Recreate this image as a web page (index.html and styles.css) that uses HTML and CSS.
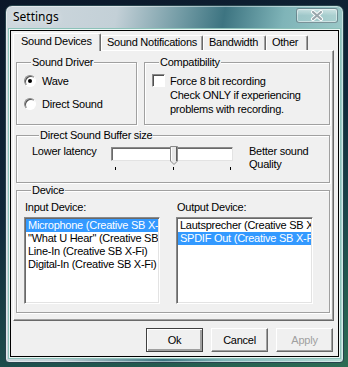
FILE: index.html
```html
<!DOCTYPE html>
<html lang="en">
<head>
    <meta charset="UTF-8">
    <title>Settings</title>
    <link rel="stylesheet" href="styles.css">
</head>
<body>
    <div class="window">
        <div class="titlebar">
            <span class="title">Settings</span>
            <div class="close">
                <svg width="14" height="11" viewBox="0 0 14 11">
                    <path d="M3 2 L11 9 M11 2 L3 9" stroke="#fff" stroke-width="4" stroke-linecap="round"/>
                    <path d="M3 2 L11 9 M11 2 L3 9" stroke="#9aa6ac" stroke-width="2.2" stroke-linecap="round"/>
                </svg>
            </div>
        </div>
        <div class="client">
            <div class="tabs">
                <div class="tab active tab-devices">Sound Devices</div>
                <div class="tab tab-notify">Sound Notifications</div>
                <div class="tab tab-bandwidth">Bandwidth</div>
                <div class="tab tab-other">Other</div>
            </div>
            <div class="panel">
                <div class="top-row">
                    <fieldset class="group driver">
                        <legend>Sound Driver</legend>
                        <div class="radio"><span class="radio-dot checked"></span>Wave</div>
                        <div class="radio"><span class="radio-dot"></span>Direct Sound</div>
                    </fieldset>
                    <fieldset class="group compat">
                        <legend>Compatibility</legend>
                        <div class="check"><span class="box"></span>Force 8 bit recording</div>
                        <div class="note">Check ONLY if experiencing<br>problems with recording.</div>
                    </fieldset>
                </div>
                <fieldset class="group buffer">
                    <legend>Direct Sound Buffer size</legend>
                    <div class="buffer-row">
                        <div class="low-label">Lower latency</div>
                        <div class="slider">
                            <div class="track"></div>
                            <svg class="thumb" width="8" height="19" viewBox="0 0 8 19">
                                <path d="M0.5 0.5 H7.5 V15 L4 18.5 L0.5 15 Z" fill="#e8e8e8" stroke="#8a8a8a"/>
                                <path d="M1.5 1.5 V14.5" stroke="#fff"/>
                                <path d="M6.5 1 V15" stroke="#606060"/>
                            </svg>
                            <div class="ticks"><span></span><span></span><span></span></div>
                        </div>
                        <div class="high-label">Better sound<br>Quality</div>
                    </div>
                </fieldset>
                <fieldset class="group device">
                    <legend>Device</legend>
                    <div class="device-cols">
                        <div class="device-col input-col">
                            <div class="col-label">Input Device:</div>
                            <ul class="list">
                                <li class="selected">Microphone (Creative SB X-Fi)</li>
                                <li>"What U Hear" (Creative SB X-Fi)</li>
                                <li>Line-In (Creative SB X-Fi)</li>
                                <li>Digital-In (Creative SB X-Fi)</li>
                            </ul>
                        </div>
                        <div class="device-col output-col">
                            <div class="col-label">Output Device:</div>
                            <ul class="list">
                                <li>Lautsprecher (Creative SB X-Fi)</li>
                                <li class="selected">SPDIF Out (Creative SB X-Fi)</li>
                            </ul>
                        </div>
                    </div>
                </fieldset>
            </div>
            <div class="buttons">
                <button class="btn default">Ok</button>
                <button class="btn">Cancel</button>
                <button class="btn disabled">Apply</button>
            </div>
        </div>
    </div>
</body>
</html>
```
FILE: styles.css
```css
* {
    box-sizing: border-box;
}
body {
    margin: 0;
    width: 348px;
    height: 367px;
    overflow: hidden;
    background: linear-gradient(160deg, #0b1729 0%, #10283a 45%, #1d4e4c 75%, #2d6d55 100%);
    font-family: "Liberation Sans", Arial, sans-serif;
    font-size: 11px;
    color: #000;
}
.window {
    margin: 5px 0 0 5px;
    width: 339px;
    height: 358px;
    border: 1px solid #27434c;
    border-radius: 7px 7px 4px 4px;
    padding: 0 4px 5px 4px;
    background: linear-gradient(100deg, #cfd8de 0%, #c3d0d7 28%, #6e98a2 45%, #3d7481 55%, #7fb4b8 70%, #b6dcd6 100%);
    box-shadow: inset 0 0 0 1px rgba(255, 255, 255, 0.45);
    display: flex;
    flex-direction: column;
}
.titlebar {
    height: 24px;
    flex: none;
    display: flex;
    justify-content: space-between;
    padding-left: 3px;
}
.title {
    font-family: "Noto Sans", sans-serif;
    font-size: 12px;
    line-height: 22px;
    text-shadow: 0 0 6px rgba(255, 255, 255, 0.9);
}
.close {
    margin-top: 2px;
    margin-right: 1px;
    width: 42px;
    height: 15px;
    border: 1px solid rgba(70, 95, 105, 0.6);
    border-radius: 3px;
    background: linear-gradient(rgba(255, 255, 255, 0.55), rgba(255, 255, 255, 0.2) 50%, rgba(200, 225, 225, 0.35));
    box-shadow: inset 0 0 0 1px rgba(255, 255, 255, 0.45);
    display: flex;
    align-items: center;
    justify-content: center;
}
.client {
    flex: 1;
    border: 1px solid #000;
    background: #f0f0f0;
    box-shadow: 0 0 0 1px #eaf6f4, 0 0 0 2px #8cc2b9;
    padding: 2px 4px 4px 2px;
    display: flex;
    flex-direction: column;
    letter-spacing: -0.25px;
}
.tabs {
    display: flex;
    align-items: flex-end;
    height: 17px;
    flex: none;
    position: relative;
    z-index: 1;
}
.tab {
    height: 15px;
    line-height: 13px;
    padding-left: 5px;
    white-space: nowrap;
    background: #f0f0f0;
    border-top: 1px solid #fff;
    border-left: 1px solid #fff;
    border-right: 1px solid #696969;
    border-radius: 2px 2px 0 0;
    box-shadow: inset -1px 0 #a0a0a0;
}
.tab.active {
    height: 18px;
    margin-bottom: -1px;
    padding-left: 7px;
    padding-top: 1px;
}
.tab-devices { width: 88px; }
.tab-notify { width: 102px; }
.tab-bandwidth { width: 63px; }
.tab-other { width: 42px; }
.panel {
    width: 321px;
    height: 271px;
    flex: none;
    border: 1px solid;
    border-color: #fff #696969 #696969 #fff;
    box-shadow: inset -1px -1px #a0a0a0;
    padding: 5px 0 0 2px;
}
.top-row {
    display: flex;
    gap: 7px;
}
.group {
    margin: 0;
    padding: 0;
    border: 1px solid #a0a0a0;
    box-shadow: inset 1px 1px #fff, 1px 1px #fff;
    min-width: 0;
}
.group legend {
    margin-left: 7px;
    padding: 0 1px;
    line-height: 13px;
    background: #f0f0f0;
}
.driver {
    width: 121px;
    padding: 5px 0 14px 7px;
}
.radio {
    display: flex;
    align-items: center;
    height: 13px;
}
.radio + .radio {
    margin-top: 10px;
}
.radio-dot {
    width: 12px;
    height: 12px;
    margin-right: 6px;
    border-radius: 50%;
    border: 1px solid;
    border-color: #8a8a8a #fff #fff #8a8a8a;
    background: #fff;
    box-shadow: inset 1px 1px #505050;
    display: flex;
    align-items: center;
    justify-content: center;
}
.radio-dot.checked::after {
    content: "";
    width: 4px;
    height: 4px;
    border-radius: 50%;
    background: #000;
}
.compat {
    width: 186px;
    padding: 5px 0 0 7px;
}
.check {
    display: flex;
    align-items: center;
    height: 13px;
}
.box {
    width: 13px;
    height: 13px;
    margin-right: 5px;
    border: 1px solid;
    border-color: #8a8a8a #fff #fff #8a8a8a;
    background: #fff;
    box-shadow: inset 1px 1px #505050;
}
.note {
    margin-top: 1px;
    padding-left: 18px;
    line-height: 14px;
}
.buffer {
    width: 314px;
    margin-top: 4px;
    padding: 0 0 11px 15px;
}
.buffer-row {
    display: flex;
    align-items: flex-start;
}
.low-label {
    width: 79px;
    margin-top: 3px;
    line-height: 13px;
}
.slider {
    position: relative;
    width: 122px;
    margin-top: 5px;
}
.track {
    height: 14px;
    background: #fff;
    border: 1px solid;
    border-color: #8a8a8a #e3e3e3 #e3e3e3 #8a8a8a;
    box-shadow: inset 1px 1px #696969;
}
.thumb {
    position: absolute;
    left: 59px;
    top: -1px;
}
.ticks {
    display: flex;
    justify-content: space-between;
    padding: 0 2px 0 4px;
    margin-top: 6px;
}
.ticks span {
    width: 1px;
    height: 3px;
    background: #000;
}
.high-label {
    margin-left: 16px;
    margin-top: 3px;
    line-height: 13px;
}
.device {
    width: 314px;
    margin-top: 1px;
    padding: 4px 0 8px 7px;
}
.device-cols {
    display: flex;
    gap: 16px;
}
.input-col {
    width: 136px;
}
.output-col {
    width: 137px;
}
.col-label {
    line-height: 13px;
    margin-bottom: 3px;
    padding-left: 1px;
}
.list {
    list-style: none;
    margin: 0;
    padding: 0;
    height: 87px;
    background: #fff;
    border: 1px solid;
    border-color: #8a8a8a #fff #fff #8a8a8a;
    box-shadow: inset 1px 1px #696969, inset -1px -1px #e3e3e3;
    overflow: hidden;
    padding: 1px 1px;
}
.list li {
    line-height: 13px;
    padding-left: 2px;
    white-space: nowrap;
    overflow: hidden;
}
.list li.selected {
    background: #3399ff;
    color: #fff;
}
.buttons {
    display: flex;
    justify-content: flex-end;
    gap: 8px;
    margin-top: 7px;
    padding-right: 1px;
}
.btn {
    width: 57px;
    height: 24px;
    padding: 0;
    font-family: "Liberation Sans", Arial, sans-serif;
    font-size: 11px;
    letter-spacing: -0.25px;
    color: #000;
    background: #f0f0f0;
    border: 1px solid;
    border-color: #fff #696969 #696969 #fff;
    box-shadow: inset -1px -1px #a0a0a0;
}
.btn.default {
    border: 1px solid #404040;
    box-shadow: inset 1px 1px #fff, inset -2px -2px #a0a0a0;
}
.btn.disabled {
    color: #a0a0a0;
}
```
